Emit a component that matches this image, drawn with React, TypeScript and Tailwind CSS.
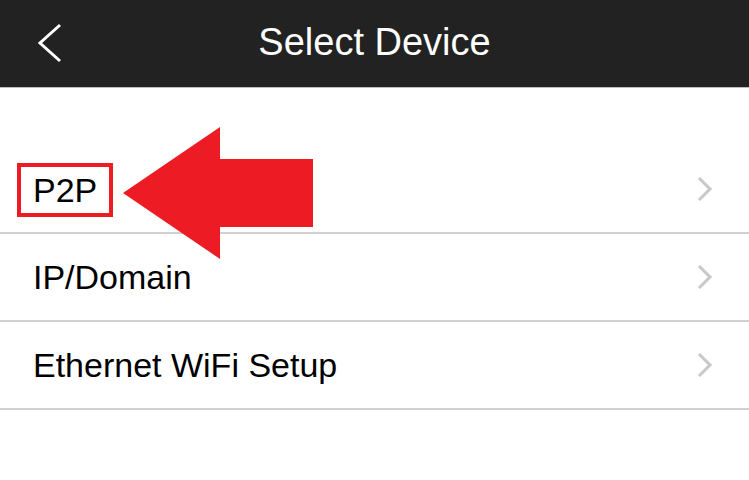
import React from "react";

const Chevron = () => (
  <svg width="18" height="26" viewBox="0 0 18 26" className="shrink-0">
    <polyline points="3,2 14,13 3,24" fill="none" stroke="#c7c7cc" strokeWidth="3" strokeLinecap="butt" strokeLinejoin="miter" />
  </svg>
);

export default function App() {
  const font = { fontFamily: '"Liberation Sans", Arial, sans-serif' };
  return (
    <div className="relative w-[749px] h-[480px] bg-white overflow-hidden" style={font}>
      <div className="relative h-[87px] bg-[#222222] flex items-center justify-center border-b border-[#bdbdbd] box-content">
        <svg width="30" height="40" viewBox="0 0 30 40" className="absolute left-[35px] top-[23px]">
          <polyline points="25,2 5,20 25,38" fill="none" stroke="#ffffff" strokeWidth="3" />
        </svg>
        <span className="text-white text-[38px] leading-none -mt-[3px]">Select Device</span>
      </div>
      <div className="h-[58px]" />
      <div className="flex flex-col">
        <div className="h-[88px] border-b-2 border-[#d1d1d1] flex items-center justify-between pl-[17px] pr-[35px]">
          <div className="h-[54px] border-[4px] border-[#ed1c24] px-3 flex items-center mt-[2px]">
            <span className="text-[34px] leading-none text-black">P2P</span>
          </div>
          <Chevron />
        </div>
        <div className="h-[88px] border-b-2 border-[#d1d1d1] flex items-center justify-between pl-[33px] pr-[35px]">
          <span className="text-[34px] leading-none text-black">IP/Domain</span>
          <Chevron />
        </div>
        <div className="h-[88px] border-b-2 border-[#d1d1d1] flex items-center justify-between pl-[33px] pr-[35px]">
          <span className="text-[34px] leading-none text-black">Ethernet WiFi Setup</span>
          <Chevron />
        </div>
      </div>
      <svg width="749" height="480" viewBox="0 0 749 480" className="absolute left-0 top-0 pointer-events-none">
        <polygon points="123,193 220,127 220,159 313,159 313,227 220,227 220,259" fill="#ed1c24" />
      </svg>
    </div>
  );
}
